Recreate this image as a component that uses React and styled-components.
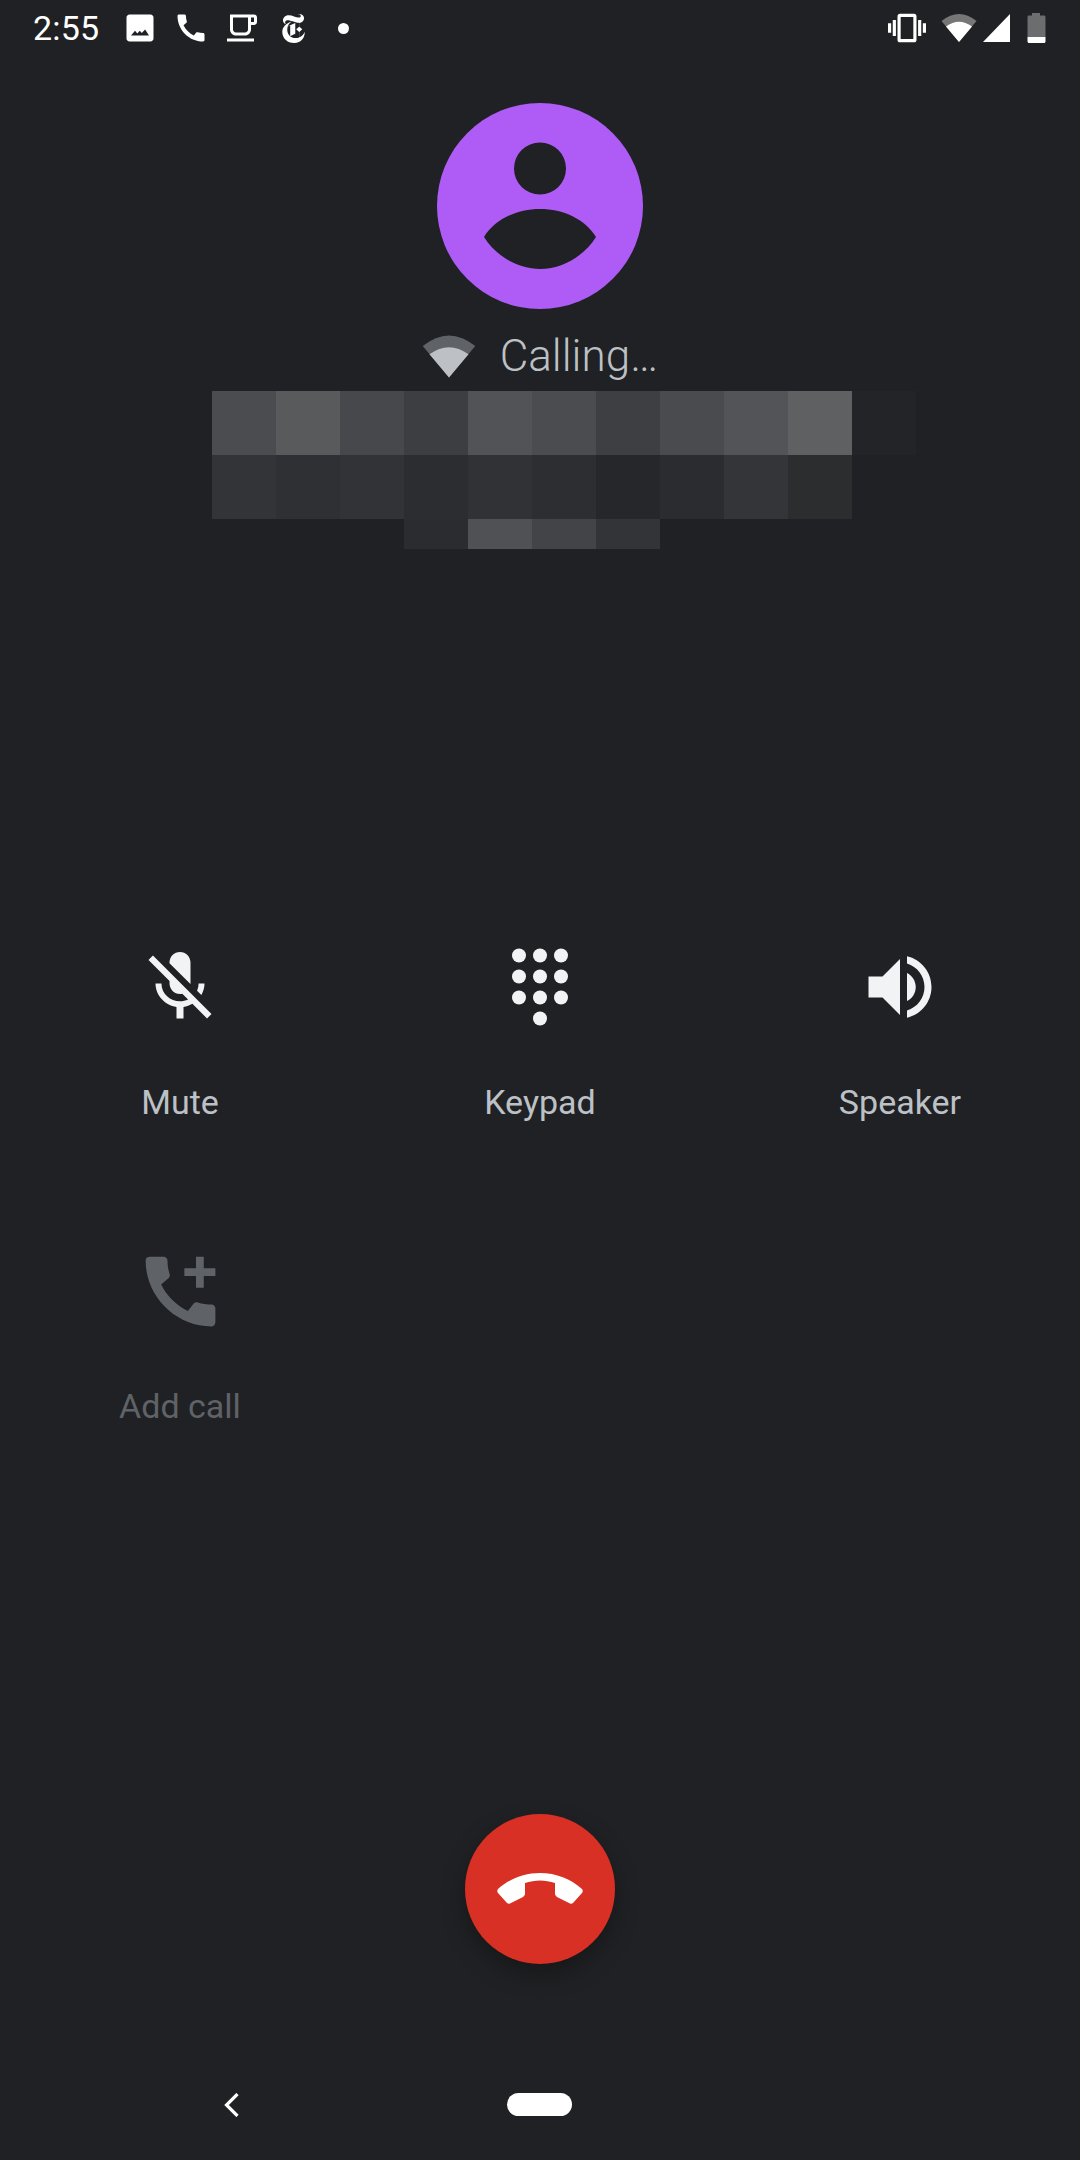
import styled, { createGlobalStyle } from "styled-components";
import { SiNewyorktimes } from "react-icons/si";

const GlobalStyle = createGlobalStyle`
    html, body {
        margin: 0;
        background-color: #202124;
    }
`

const PHONE = "M20.01 15.38c-1.23 0-2.42-.2-3.53-.56-.35-.12-.74-.03-1.01.24l-1.57 1.97c-2.83-1.35-5.48-3.9-6.89-6.83l1.95-1.66c.27-.28.35-.67.24-1.02-.37-1.11-.56-2.3-.56-3.53 0-.54-.45-.99-.99-.99H4.19C3.65 3 3 3.24 3 3.99 3 13.28 10.73 21 20.01 21c.71 0 .99-.63.99-1.18v-3.45c0-.54-.45-.99-.99-.99z"

const Page = styled.div`
    display: flex;
    flex-direction: column;
    width: 1080px;
    height: 2160px;
    overflow: hidden;
    background-color: #202124;
    font-family: Roboto, "Liberation Sans", sans-serif;
`

const StatusBar = styled.div`
    display: flex;
    align-items: center;
    height: 56px;
    padding: 0 0 7px 33px;
    flex-shrink: 0;
    color: #ffffff;
`

const Clock = styled.span`
    width: 89px;
    font-size: 34px;
    line-height: 40px;
    letter-spacing: 0.2px;
`

const Notifications = styled.div`
    display: flex;
    align-items: center;
    gap: 15px;
`

const StatusIcons = styled.div`
    display: flex;
    align-items: center;
    margin-left: auto;
    padding-right: 34px;
`

const Glyph = styled.svg`
    display: block;
    flex-shrink: 0;
    width: ${(p) => p.$size}px;
    height: ${(p) => p.$h || p.$size}px;
    margin-left: ${(p) => p.$left || 0}px;
    fill: ${(p) => p.$color || "currentColor"};
`

const NoteDot = styled.span`
    display: block;
    width: 11px;
    height: 11px;
    margin: 0 12px;
    border-radius: 50%;
    background-color: #ffffff;
`

const LogoSlot = styled.span`
    display: flex;
    justify-content: center;
    width: 36px;
    font-size: 29px;
    line-height: 0;
`

const Avatar = styled.div`
    align-self: center;
    width: 206px;
    height: 206px;
    margin-top: 40px;
    border-radius: 50%;
    background-color: #af5cf7;
`

const CallState = styled.div`
    display: flex;
    align-items: center;
    justify-content: center;
    gap: 24px;
    height: 43px;
    margin-top: 26px;
`

const CallText = styled.span`
    font-size: 44px;
    font-weight: 300;
    line-height: 43px;
    color: #bdc1c6;
`

const Mosaic = styled.div`
    display: flex;
    flex-direction: column;
    margin-top: 13px;
    padding-left: 212px;
`

const MosaicRow = styled.div`
    display: flex;
    height: ${(p) => p.$height}px;
    margin-left: ${(p) => p.$offset || 0}px;
`

const Tile = styled.span`
    display: block;
    width: 64px;
    background-color: ${(p) => p.$color};
`

const Controls = styled.div`
    display: grid;
    grid-template-columns: repeat(3, 360px);
    row-gap: 119px;
    margin-top: 390px;
`

const Control = styled.div`
    display: flex;
    flex-direction: column;
    align-items: center;
    color: ${(p) => (p.$disabled ? "#5f6368" : "#f1f3f4")};
`

const ControlIcon = styled.div`
    display: flex;
    align-items: center;
    justify-content: center;
    height: 96px;
`

const ControlLabel = styled.span`
    margin-top: 45px;
    font-size: 34px;
    line-height: 44px;
    color: ${(p) => (p.$disabled ? "#5f6368" : "#bdc1c6")};
`

const EndCall = styled.div`
    display: flex;
    align-items: center;
    justify-content: center;
    align-self: center;
    width: 150px;
    height: 150px;
    margin-top: 386px;
    border-radius: 50%;
    background-color: #d93025;
    box-shadow: 0 10px 24px rgba(0, 0, 0, 0.3);
`

const NavBar = styled.div`
    display: flex;
    align-items: center;
    gap: 268px;
    height: 23px;
    margin-top: 129px;
    padding-left: 224px;
`

const HomePill = styled.span`
    display: block;
    width: 65px;
    height: 23px;
    border-radius: 12px;
    background-color: #ffffff;
`

const mosaicRows = [
    {
        height: 64,
        tiles: ["#4b4c4f", "#585a5c", "#47484b", "#3d3e41", "#525356", "#4b4c4f", "#3e3f42", "#4a4b4f", "#535458", "#5f6062", "#232428"],
    },
    {
        height: 64,
        tiles: ["#333437", "#2f3033", "#323336", "#2c2d30", "#313235", "#2d2e31", "#26272a", "#2b2c2f", "#343538", "#2c2d2f"],
    },
    { height: 30, offset: 192, tiles: ["#2b2c2f", "#505155", "#434447", "#333437"] },
]

const WifiFan = ({ width, height, band, core }) => (
    <Glyph $size={width} $h={height} viewBox="0 0 36 28">
        <path fill={band} d="M18 28 L0.5 7 Q18 -7 35.5 7 Z" />
        <path fill={core} d="M18 28 L5 12.500 Q18 3 31 12.500 Z" />
    </Glyph>
)

const App = () => {
    return <>
    <GlobalStyle />
    <Page>
        <StatusBar>
            <Clock>2:55</Clock>
            <Notifications>
                <Glyph $size={36} viewBox="0 0 24 24">
                    <path fillRule="evenodd" d="M5 3h14c1.100 0 2 .9 2 2v14c0 1.100-.9 2-2 2H5c-1.100 0-2-.9-2-2V5c0-1.100.9-2 2-2zM6 17h12l-2.600-4-2.200 2.400-1.300-1.500-1.700 1.700-1.500-1.700z" />
                </Glyph>
                <Glyph $size={36} viewBox="0 0 24 24"><path d={PHONE} /></Glyph>
                <Glyph $size={36} viewBox="0 0 24 24">
                    <path d="M2 21h18v-2H2v2zM20 3H4v10c0 2.210 1.790 4 4 4h6c2.210 0 4-1.790 4-4v-3h2c1.110 0 2-.9 2-2V5c0-1.110-.89-2-2-2zm-4 10c0 1.100-.9 2-2 2H8c-1.100 0-2-.9-2-2V5h10v8zm4-5h-2V5h2v3z" />
                </Glyph>
                <LogoSlot><SiNewyorktimes /></LogoSlot>
                <NoteDot />
            </Notifications>
            <StatusIcons>
                <Glyph $size={38} $h={38} viewBox="0 0 24 24">
                    <path d="M0 15h2V9H0v6zm3 2h2V7H3v10zm19-8v6h2V9h-2zm-3 8h2V7h-2v10zM16.500 3h-9C6.670 3 6 3.670 6 4.500v15c0 .83.67 1.500 1.500 1.500h9c.83 0 1.500-.67 1.500-1.500v-15c0-.83-.67-1.500-1.500-1.500zM16 19H8V5h8v14z" />
                </Glyph>
                <Glyph as="span" $size={15} $h={1} />
                <WifiFan width={36} height={28} band="#767676" core="#ffffff" />
                <Glyph $size={27} $h={28} $left={6} viewBox="0 0 27 28"><path d="M27 0V28H0Z" /></Glyph>
                <Glyph $size={19} $h={30} $left={17} viewBox="0 0 19 30">
                    <path fill="#6c6d6e" d="M5 0h8v2.500h4c.8 0 1.500.7 1.500 1.500V24H.5V4c0-.8.7-1.500 1.500-1.500h3z" />
                    <path d="M.5 24h18v4.500c0 .8-.7 1.500-1.500 1.500H2c-.8 0-1.500-.7-1.500-1.500z" />
                </Glyph>
            </StatusIcons>
        </StatusBar>

        <Avatar>
            <Glyph $size={206} viewBox="0 0 206 206" $color="#202124">
                <circle cx="103" cy="65.500" r="26" />
                <path d="M47 134 C58 116 80 106 103 106 C126 106 148 116 159 134 C148 152 126 166 103 166 C80 166 58 152 47 134Z" />
            </Glyph>
        </Avatar>

        <CallState>
            <WifiFan width={54} height={43} band="#5f6368" core="#bdc1c6" />
            <CallText>Calling…</CallText>
        </CallState>

        <Mosaic>
            {mosaicRows.map((row) => (
                <MosaicRow key={row.tiles[0] + row.height} $height={row.height} $offset={row.offset}>
                    {row.tiles.map((color, i) => <Tile key={i} $color={color} />)}
                </MosaicRow>
            ))}
        </Mosaic>

        <Controls>
            <Control>
                <ControlIcon>
                    <Glyph $size={84} viewBox="0 0 24 24">
                        <path d="M19 11h-1.700c0 .74-.16 1.430-.43 2.050l1.230 1.230c.56-.98.9-2.090.9-3.280zm-4.020.17c0-.06.02-.11.02-.17V5c0-1.660-1.340-3-3-3S9 3.340 9 5v.18l5.980 5.990zM4.270 3L3 4.270l6.010 6.010V11c0 1.660 1.330 3 2.990 3 .22 0 .44-.03.65-.08l1.660 1.660c-.71.33-1.500.52-2.310.52-2.760 0-5.300-2.100-5.300-5.100H5c0 3.410 2.720 6.230 6 6.720V21h2v-3.280c.91-.13 1.770-.45 2.540-.9L19.730 21 21 19.730 4.270 3z" />
                    </Glyph>
                </ControlIcon>
                <ControlLabel>Mute</ControlLabel>
            </Control>
            <Control>
                <ControlIcon>
                    <Glyph $size={84} viewBox="0 0 24 24">
                        {[3, 9, 15].map((cy) => [6, 12, 18].map((cx) => (
                            <circle key={`${cx}-${cy}`} cx={cx} cy={cy} r="2" />
                        )))}
                        <circle cx="12" cy="21" r="2" />
                    </Glyph>
                </ControlIcon>
                <ControlLabel>Keypad</ControlLabel>
            </Control>
            <Control>
                <ControlIcon>
                    <Glyph $size={84} viewBox="0 0 24 24">
                        <path d="M3 9v6h4l5 5V4L7 9H3zm13.500 3c0-1.770-1.020-3.290-2.500-4.030v8.050c1.480-.73 2.500-2.250 2.500-4.020zM14 3.230v2.060c2.890.86 5 3.540 5 6.710s-2.110 5.850-5 6.710v2.060c4.010-.91 7-4.490 7-8.770s-2.990-7.860-7-8.770z" />
                    </Glyph>
                </ControlIcon>
                <ControlLabel>Speaker</ControlLabel>
            </Control>
            <Control $disabled>
                <ControlIcon>
                    <Glyph $size={93} viewBox="0 0 24 24">
                        <path d={PHONE} />
                        <path d="M21 6h-3V3h-2v3h-3v2h3v3h2V8h3z" />
                    </Glyph>
                </ControlIcon>
                <ControlLabel $disabled>Add call</ControlLabel>
            </Control>
        </Controls>

        <EndCall>
            <Glyph $size={86} $h={32} viewBox="0 0 86 32" $color="#ffffff">
                <path d="M1 16 C12 6 27 0 43 0 C59 0 74 6 85 16 C86 17 86 19 85 20 L76 30 C75 31 73 31 72 30 L60 24 C59 23 58 22 58 21 L58 10 C48 6.500 38 6.500 28 10 L28 21 C28 22 27 23 26 24 L14 30 C13 31 11 31 10 30 L1 20 C0 19 0 17 1 16Z" />
            </Glyph>
        </EndCall>

        <NavBar>
            <svg width="15" height="24" viewBox="0 0 15 24" fill="none" stroke="#ffffff" strokeWidth="3.200">
                <path d="M13.500 1 L2.500 12 L13.500 23" />
            </svg>
            <HomePill />
        </NavBar>
    </Page>
    </>
};

export default App
